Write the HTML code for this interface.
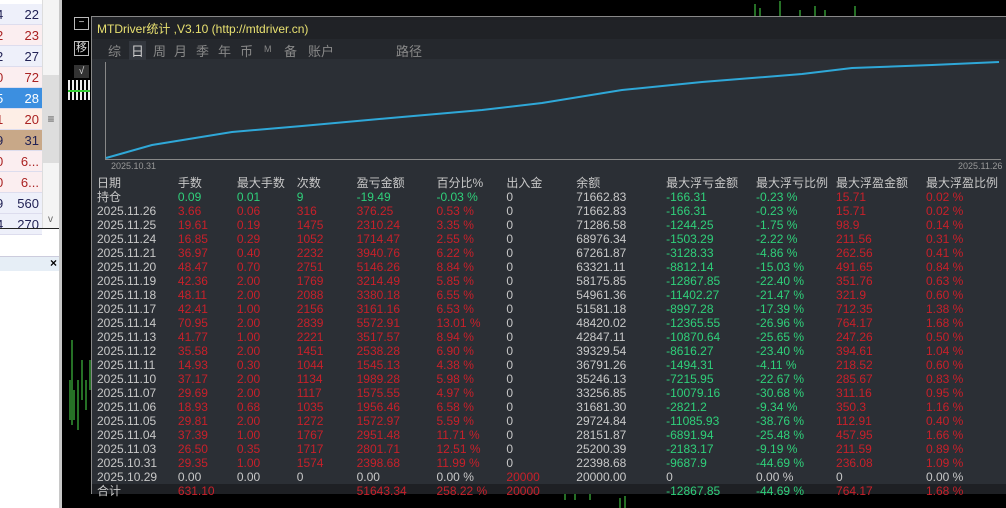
<!DOCTYPE html>
<html><head><meta charset="utf-8"><style>
*{margin:0;padding:0;box-sizing:border-box}
body{width:1006px;height:508px;overflow:hidden;background:#000;position:relative;font-family:"Liberation Sans","Noto Sans CJK SC",sans-serif;}
.abs{position:absolute}
#left{left:0;top:0;width:62px;height:508px;background:#fff;border-right:3px solid #c8c8c8}
.lr{position:absolute;left:0;width:42px;height:21px;font-size:13px;line-height:21px;border-bottom:1px solid #dde}
.lr span{position:absolute;right:3px}
.lr b{position:absolute;left:-4px;font-weight:normal}
#panel{left:91px;top:16px;width:915px;height:478px;background:#2b2f35;border-left:1px solid #888;border-top:1px solid #888;border-bottom:1px solid #999}
table{position:absolute;left:5px;top:159px;border-collapse:collapse;font-size:12px;}
td{height:14px;line-height:14px;padding:0;white-space:nowrap;color:#c8c8c8;vertical-align:middle}
.g td{color:#2fd07a}
.r{color:#c8202a!important}
.gr{color:#2fd07a!important}
.w{color:#c8c8c8!important}
.tab{position:absolute;top:24px;font-size:13px;color:#888}
</style></head><body>
<div id="left" class="abs">
<div class="lr" style="top:4px;background:#eef0fa;color:#225"><b>4</b><span>22</span></div>
<div class="lr" style="top:25px;background:#fbeef0;color:#a22"><b>2</b><span>23</span></div>
<div class="lr" style="top:46px;background:#eef0fa;color:#225"><b>2</b><span>27</span></div>
<div class="lr" style="top:67px;background:#fbeef0;color:#a22"><b>0</b><span>72</span></div>
<div class="lr" style="top:88px;background:#3c8fe0;color:#fff"><b>5</b><span>28</span></div>
<div class="lr" style="top:109px;background:#fdeee6;color:#a22"><b>1</b><span>20</span></div>
<div class="lr" style="top:130px;background:#c8a888;color:#225"><b>9</b><span>31</span></div>
<div class="lr" style="top:151px;background:#fbeef0;color:#a22"><b>0</b><span>6...</span></div>
<div class="lr" style="top:172px;background:#fbeef0;color:#a22"><b>0</b><span>6...</span></div>
<div class="lr" style="top:193px;background:#eef0fa;color:#225"><b>9</b><span>560</span></div>
<div class="lr" style="top:214px;background:#eef0fa;color:#225"><b>4</b><span>270</span></div>
<div class="abs" style="left:42px;top:0;width:17px;height:228px;background:#f4f4f4;border-left:1px solid #ddd"></div>
<div class="abs" style="left:43px;top:75px;width:16px;height:88px;background:#ddd;font-size:12px;color:#555;text-align:center;line-height:88px">≡</div>
<div class="abs" style="left:48px;top:214px;font-size:10px;color:#666">v</div>
<div class="abs" style="left:0;top:228px;width:59px;height:1px;background:#222"></div>
<div class="abs" style="left:0;top:256px;width:59px;height:15px;background:#e6eef6;border-top:1px solid #ccd"></div>
<div class="abs" style="left:50px;top:256px;font-size:12px;font-weight:bold">×</div>
</div>
<div class="abs" style="left:74px;top:17px;width:15px;height:13px;border:1px solid #bbb;color:#ddd;font-size:10px;line-height:10px;text-align:center">−</div>
<div class="abs" style="left:74px;top:41px;width:15px;height:15px;border:1px solid #bbb;color:#ddd;font-size:11px;line-height:13px;text-align:center">移</div>
<div class="abs" style="left:74px;top:65px;width:15px;height:13px;background:#333;color:#ddd;font-size:10px;line-height:13px;text-align:center">√</div>
<div class="abs" style="left:68px;top:80px;width:22px;height:20px;background:repeating-linear-gradient(90deg,#eee 0 2px,#000 2px 4px)"></div>
<div class="abs" style="left:68px;top:90px;width:22px;height:2px;background:#3c3"></div>
<svg class="abs" style="left:60px;top:0" width="946" height="508">
<g stroke="#4ce04c" stroke-width="1" fill="none">
<path d="M10 420v-40M14 420v-30M18 430v-50M22 400v-40M26 410v-30M30 390v-30"/>
<path d="M12 425v-85M505 500v-12M515 500v-15M530 500v-15M560 508v-10M565 508v-12"/>
<path d="M695 16v-12M700 16v-8M720 16v-15M755 16v-10M765 16v-6M795 16v-10M740 16v-6"/>
</g></svg>
<div id="panel" class="abs">
<div class="abs" style="left:0;top:0;width:914px;height:22px;background:#202226"></div>
<div class="abs" style="left:5px;top:3px;font-size:12px;color:#e8e070">MTDriver统计 ,V3.10 (http://mtdriver.cn)</div>
<div class="abs" style="left:0;top:22px;width:914px;height:20px;background:#25282d"></div>
<div class="tab" style="left:16px">综</div>
<div class="tab" style="left:37px;background:#33373e;color:#ccc;padding:0 2px">日</div>
<div class="tab" style="left:61px">周</div>
<div class="tab" style="left:82px">月</div>
<div class="tab" style="left:104px">季</div>
<div class="tab" style="left:126px">年</div>
<div class="tab" style="left:148px">币</div>
<div class="tab" style="left:172px;font-size:9px;top:27px">M</div>
<div class="tab" style="left:192px">备</div>
<div class="tab" style="left:216px">账户</div>
<div class="tab" style="left:304px">路径</div>
<div class="abs" style="left:13px;top:45px;width:1px;height:98px;background:#888"></div>
<div class="abs" style="left:13px;top:142px;width:896px;height:1px;background:#888"></div>
<div class="abs" style="left:19px;top:144px;font-size:9px;color:#999">2025.10.31</div>
<div class="abs" style="left:866px;top:144px;font-size:9px;color:#999">2025.11.26</div>
<svg class="abs" style="left:0;top:0" width="914" height="160"><polyline fill="none" stroke="#2fa8d8" stroke-width="2" points="14,141 60,128 140,115 210,109 310,100 390,93 450,86 530,73 610,65 710,57 760,51 840,48 907,45"/></svg>
<div class="abs" style="left:0;top:467px;width:914px;height:10px;background:#1e2024"></div>
<table>
<colgroup><col width="81"><col width="59"><col width="60"><col width="60"><col width="80"><col width="70"><col width="70"><col width="90"><col width="90"><col width="80"><col width="90"><col width="80"></colgroup>
<tr><td>日期</td><td>手数</td><td>最大手数</td><td>次数</td><td>盈亏金额</td><td>百分比%</td><td>出入金</td><td>余额</td><td>最大浮亏金额</td><td>最大浮亏比例</td><td>最大浮盈金额</td><td>最大浮盈比例</td></tr>
<tr class="g"><td class="w">持仓</td><td>0.09</td><td>0.01</td><td>9</td><td>-19.49</td><td>-0.03 %</td><td class="w">0</td><td class="w">71662.83</td><td>-166.31</td><td>-0.23 %</td><td class="r">15.71</td><td class="r">0.02 %</td></tr>
<tr><td>2025.11.26</td><td class="r">3.66</td><td class="r">0.06</td><td class="r">316</td><td class="r">376.25</td><td class="r">0.53 %</td><td>0</td><td>71662.83</td><td class="gr">-166.31</td><td class="gr">-0.23 %</td><td class="r">15.71</td><td class="r">0.02 %</td></tr>
<tr><td>2025.11.25</td><td class="r">19.61</td><td class="r">0.19</td><td class="r">1475</td><td class="r">2310.24</td><td class="r">3.35 %</td><td>0</td><td>71286.58</td><td class="gr">-1244.25</td><td class="gr">-1.75 %</td><td class="r">98.9</td><td class="r">0.14 %</td></tr>
<tr><td>2025.11.24</td><td class="r">16.85</td><td class="r">0.29</td><td class="r">1052</td><td class="r">1714.47</td><td class="r">2.55 %</td><td>0</td><td>68976.34</td><td class="gr">-1503.29</td><td class="gr">-2.22 %</td><td class="r">211.56</td><td class="r">0.31 %</td></tr>
<tr><td>2025.11.21</td><td class="r">36.97</td><td class="r">0.40</td><td class="r">2232</td><td class="r">3940.76</td><td class="r">6.22 %</td><td>0</td><td>67261.87</td><td class="gr">-3128.33</td><td class="gr">-4.86 %</td><td class="r">262.56</td><td class="r">0.41 %</td></tr>
<tr><td>2025.11.20</td><td class="r">48.47</td><td class="r">0.70</td><td class="r">2751</td><td class="r">5146.26</td><td class="r">8.84 %</td><td>0</td><td>63321.11</td><td class="gr">-8812.14</td><td class="gr">-15.03 %</td><td class="r">491.65</td><td class="r">0.84 %</td></tr>
<tr><td>2025.11.19</td><td class="r">42.36</td><td class="r">2.00</td><td class="r">1769</td><td class="r">3214.49</td><td class="r">5.85 %</td><td>0</td><td>58175.85</td><td class="gr">-12867.85</td><td class="gr">-22.40 %</td><td class="r">351.76</td><td class="r">0.63 %</td></tr>
<tr><td>2025.11.18</td><td class="r">48.11</td><td class="r">2.00</td><td class="r">2088</td><td class="r">3380.18</td><td class="r">6.55 %</td><td>0</td><td>54961.36</td><td class="gr">-11402.27</td><td class="gr">-21.47 %</td><td class="r">321.9</td><td class="r">0.60 %</td></tr>
<tr><td>2025.11.17</td><td class="r">42.41</td><td class="r">1.00</td><td class="r">2156</td><td class="r">3161.16</td><td class="r">6.53 %</td><td>0</td><td>51581.18</td><td class="gr">-8997.28</td><td class="gr">-17.39 %</td><td class="r">712.35</td><td class="r">1.38 %</td></tr>
<tr><td>2025.11.14</td><td class="r">70.95</td><td class="r">2.00</td><td class="r">2839</td><td class="r">5572.91</td><td class="r">13.01 %</td><td>0</td><td>48420.02</td><td class="gr">-12365.55</td><td class="gr">-26.96 %</td><td class="r">764.17</td><td class="r">1.68 %</td></tr>
<tr><td>2025.11.13</td><td class="r">41.77</td><td class="r">1.00</td><td class="r">2221</td><td class="r">3517.57</td><td class="r">8.94 %</td><td>0</td><td>42847.11</td><td class="gr">-10870.64</td><td class="gr">-25.65 %</td><td class="r">247.26</td><td class="r">0.50 %</td></tr>
<tr><td>2025.11.12</td><td class="r">35.58</td><td class="r">2.00</td><td class="r">1451</td><td class="r">2538.28</td><td class="r">6.90 %</td><td>0</td><td>39329.54</td><td class="gr">-8616.27</td><td class="gr">-23.40 %</td><td class="r">394.61</td><td class="r">1.04 %</td></tr>
<tr><td>2025.11.11</td><td class="r">14.93</td><td class="r">0.30</td><td class="r">1044</td><td class="r">1545.13</td><td class="r">4.38 %</td><td>0</td><td>36791.26</td><td class="gr">-1494.31</td><td class="gr">-4.11 %</td><td class="r">218.52</td><td class="r">0.60 %</td></tr>
<tr><td>2025.11.10</td><td class="r">37.17</td><td class="r">2.00</td><td class="r">1134</td><td class="r">1989.28</td><td class="r">5.98 %</td><td>0</td><td>35246.13</td><td class="gr">-7215.95</td><td class="gr">-22.67 %</td><td class="r">285.67</td><td class="r">0.83 %</td></tr>
<tr><td>2025.11.07</td><td class="r">29.69</td><td class="r">2.00</td><td class="r">1117</td><td class="r">1575.55</td><td class="r">4.97 %</td><td>0</td><td>33256.85</td><td class="gr">-10079.16</td><td class="gr">-30.68 %</td><td class="r">311.16</td><td class="r">0.95 %</td></tr>
<tr><td>2025.11.06</td><td class="r">18.93</td><td class="r">0.68</td><td class="r">1035</td><td class="r">1956.46</td><td class="r">6.58 %</td><td>0</td><td>31681.30</td><td class="gr">-2821.2</td><td class="gr">-9.34 %</td><td class="r">350.3</td><td class="r">1.16 %</td></tr>
<tr><td>2025.11.05</td><td class="r">29.81</td><td class="r">2.00</td><td class="r">1272</td><td class="r">1572.97</td><td class="r">5.59 %</td><td>0</td><td>29724.84</td><td class="gr">-11085.93</td><td class="gr">-38.76 %</td><td class="r">112.91</td><td class="r">0.40 %</td></tr>
<tr><td>2025.11.04</td><td class="r">37.39</td><td class="r">1.00</td><td class="r">1767</td><td class="r">2951.48</td><td class="r">11.71 %</td><td>0</td><td>28151.87</td><td class="gr">-6891.94</td><td class="gr">-25.48 %</td><td class="r">457.95</td><td class="r">1.66 %</td></tr>
<tr><td>2025.11.03</td><td class="r">26.50</td><td class="r">0.35</td><td class="r">1717</td><td class="r">2801.71</td><td class="r">12.51 %</td><td>0</td><td>25200.39</td><td class="gr">-2183.17</td><td class="gr">-9.19 %</td><td class="r">211.59</td><td class="r">0.89 %</td></tr>
<tr><td>2025.10.31</td><td class="r">29.35</td><td class="r">1.00</td><td class="r">1574</td><td class="r">2398.68</td><td class="r">11.99 %</td><td>0</td><td>22398.68</td><td class="gr">-9687.9</td><td class="gr">-44.69 %</td><td class="r">236.08</td><td class="r">1.09 %</td></tr>
<tr><td>2025.10.29</td><td>0.00</td><td>0.00</td><td>0</td><td>0.00</td><td>0.00 %</td><td class="r">20000</td><td>20000.00</td><td>0</td><td>0.00 %</td><td>0</td><td>0.00 %</td></tr>
<tr><td>合计</td><td class="r">631.10</td><td></td><td></td><td class="r">51643.34</td><td class="r">258.22 %</td><td class="r">20000</td><td></td><td class="gr">-12867.85</td><td class="gr">-44.69 %</td><td class="r">764.17</td><td class="r">1.68 %</td></tr>
</table>
</div>
</body></html>
